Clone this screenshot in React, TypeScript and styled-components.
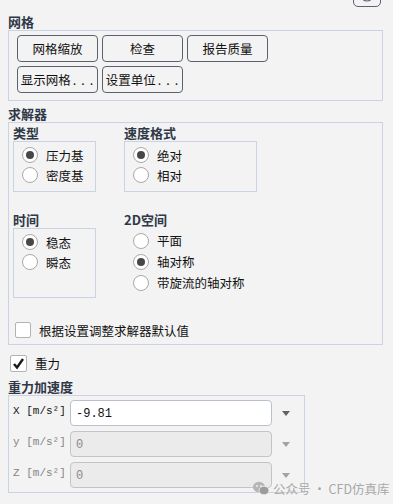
import styled, { createGlobalStyle } from "styled-components"

const GlobalStyle = createGlobalStyle`
  body {
    margin: 0;
    background: #f3f3f3;
    font-family: "Noto Sans CJK SC", "Noto Sans", sans-serif;
    color: #111;
  }
`

const Page = styled.div`
  position: relative;
  width: 393px;
  height: 504px;
  overflow: hidden;
  padding-left: 8px;
  box-sizing: border-box;
`

const TopBar = styled.div`
  height: 7px;
  display: flex;
  justify-content: flex-end;
  align-items: flex-end;
  overflow: hidden;
  margin-right: 12px;
`

const IconButton = styled.div`
  width: 28px;
  height: 20px;
  flex-shrink: 0;
  box-sizing: border-box;
  border: 1px solid #5a6270;
  border-radius: 5px;
  display: flex;
  justify-content: center;
  align-items: flex-start;
`

const SectionTitle = styled.div<{ $top: number }>`
  margin-top: ${(p) => p.$top}px;
  font-size: 13px;
  font-weight: 700;
  line-height: 16px;
  height: 16px;
  color: #2f3847;
`

const Group = styled.div<{ $w: number; $h: number }>`
  width: ${(p) => p.$w}px;
  height: ${(p) => p.$h}px;
  box-sizing: border-box;
  border: 1px solid #cbd3e3;
`

const ButtonGrid = styled.div`
  display: grid;
  grid-template-columns: repeat(3, 81px);
  grid-auto-rows: 27px;
  column-gap: 4px;
  row-gap: 4px;
  padding: 4px 0 0 8px;
`

const Button = styled.div`
  box-sizing: border-box;
  border: 1px solid #5a6270;
  border-radius: 4px;
  display: flex;
  align-items: center;
  justify-content: center;
  font-size: 12.5px;
  color: #111;
  white-space: nowrap;
`

const Dots = styled.span`
  letter-spacing: 5px;
  margin-left: 2px;
  margin-right: -4px;
`

const SolverGrid = styled.div`
  display: grid;
  grid-template-columns: 111px 1fr;
  row-gap: 20px;
  padding: 2px 0 0 4px;
`

const SubTitle = styled.div`
  font-size: 13px;
  font-weight: 700;
  line-height: 16px;
  height: 16px;
  color: #2f3847;
`

const SubBox = styled.div<{ $w: number; $h: number }>`
  width: ${(p) => p.$w}px;
  height: ${(p) => p.$h}px;
  box-sizing: border-box;
  border: 1px solid #cbd3e3;
  padding: 3px 0 0 8px;
`

const RadioList = styled.div`
  padding: 2px 0 0 9px;
`

const RadioRow = styled.div<{ $h?: number }>`
  height: ${(p) => p.$h ?? 20}px;
  display: flex;
  align-items: center;
  gap: 8px;
  font-size: 12.5px;
  color: #111;
`

const RadioCircle = styled.span<{ $on?: boolean }>`
  width: 16px;
  height: 16px;
  box-sizing: border-box;
  border-radius: 50%;
  border: 1px solid #a9a9a9;
  background: #fff;
  display: flex;
  align-items: center;
  justify-content: center;

  &::after {
    content: "";
    width: 8px;
    height: 8px;
    border-radius: 50%;
    background: ${(p) => (p.$on ? "#474747" : "transparent")};
  }
`

const CheckRow = styled.div<{ $top: number; $left: number }>`
  margin-top: ${(p) => p.$top}px;
  margin-left: ${(p) => p.$left}px;
  height: 18px;
  display: flex;
  align-items: center;
  gap: 8px;
  font-size: 12.5px;
  color: #111;
`

const CheckBox = styled.span<{ $size: number }>`
  width: ${(p) => p.$size}px;
  height: ${(p) => p.$size}px;
  box-sizing: border-box;
  border: 1px solid #b3b3b3;
  border-radius: 2px;
  background: #fff;
  display: flex;
  align-items: center;
  justify-content: center;
`

const VectorRows = styled.div`
  display: flex;
  flex-direction: column;
  gap: 5px;
  padding: 4px 0 0 4px;
`

const VectorRow = styled.div`
  display: flex;
  align-items: center;
  height: 26px;
`

const AxisLabel = styled.div<{ $dim?: boolean }>`
  width: 57px;
  align-self: flex-start;
  padding-top: 3px;
  font-family: "Liberation Mono", "Noto Sans CJK SC", monospace;
  font-size: 11px;
  line-height: 16px;
  color: ${(p) => (p.$dim ? "#868686" : "#151515")};
  white-space: nowrap;
`

const ValueField = styled.div<{ $dim?: boolean }>`
  width: 202px;
  height: 26px;
  box-sizing: border-box;
  border: 1px solid ${(p) => (p.$dim ? "#c4c4c4" : "#b9c0cb")};
  border-radius: 4px;
  background: ${(p) => (p.$dim ? "#ebebeb" : "#fff")};
  padding: 3px 0 0 5px;
  font-family: "Liberation Mono", monospace;
  font-size: 12px;
  line-height: 20px;
  color: ${(p) => (p.$dim ? "#8a8a8a" : "#111")};
`

const DropArrow = styled.span<{ $dim?: boolean }>`
  margin-left: 10px;
  width: 0;
  height: 0;
  border-left: 4px solid transparent;
  border-right: 4px solid transparent;
  border-top: 5px solid ${(p) => (p.$dim ? "#a3a3a3" : "#5f6368")};
`

const Watermark = styled.div`
  position: absolute;
  left: 253px;
  top: 479px;
  display: flex;
  align-items: center;
  gap: 4px;
  font-size: 12.5px;
  color: #a8a8a8;
  white-space: nowrap;
`

export default function App() {
  return (
    <Page>
      <GlobalStyle />
      <TopBar>
        <IconButton>
          <svg width="14" height="18" viewBox="0 0 14 18">
            <circle cx="7" cy="7" r="6" fill="none" stroke="#5a6270" strokeWidth="1.2" />
          </svg>
        </IconButton>
      </TopBar>

      <SectionTitle $top={7}>网格</SectionTitle>
      <Group $w={375} $h={71}>
        <ButtonGrid>
          <Button>网格缩放</Button>
          <Button>检查</Button>
          <Button>报告质量</Button>
          <Button>
            显示网格<Dots>...</Dots>
          </Button>
          <Button>
            设置单位<Dots>...</Dots>
          </Button>
        </ButtonGrid>
      </Group>

      <SectionTitle $top={5}>求解器</SectionTitle>
      <Group $w={375} $h={223}>
        <SolverGrid>
          <div>
            <SubTitle>类型</SubTitle>
            <SubBox $w={83} $h={51}>
              <RadioRow>
                <RadioCircle $on />
                压力基
              </RadioRow>
              <RadioRow>
                <RadioCircle />
                密度基
              </RadioRow>
            </SubBox>
          </div>
          <div>
            <SubTitle>速度格式</SubTitle>
            <SubBox $w={133} $h={51}>
              <RadioRow>
                <RadioCircle $on />
                绝对
              </RadioRow>
              <RadioRow>
                <RadioCircle />
                相对
              </RadioRow>
            </SubBox>
          </div>
          <div>
            <SubTitle>时间</SubTitle>
            <SubBox $w={83} $h={70}>
              <RadioRow>
                <RadioCircle $on />
                稳态
              </RadioRow>
              <RadioRow>
                <RadioCircle />
                瞬态
              </RadioRow>
            </SubBox>
          </div>
          <div>
            <SubTitle>2D空间</SubTitle>
            <RadioList>
              <RadioRow $h={21}>
                <RadioCircle />
                平面
              </RadioRow>
              <RadioRow $h={21}>
                <RadioCircle $on />
                轴对称
              </RadioRow>
              <RadioRow $h={21}>
                <RadioCircle />
                带旋流的轴对称
              </RadioRow>
            </RadioList>
          </div>
        </SolverGrid>
        <CheckRow $top={23} $left={6}>
          <CheckBox $size={16} />
          根据设置调整求解器默认值
        </CheckRow>
      </Group>

      <CheckRow $top={9} $left={2}>
        <CheckBox $size={17}>
          <svg width="13" height="13" viewBox="0 0 13 13">
            <path d="M2 7 L5 10.5 L11 2" fill="none" stroke="#1a1a1a" strokeWidth="2.4" />
          </svg>
        </CheckBox>
        重力
      </CheckRow>

      <SectionTitle $top={7}>重力加速度</SectionTitle>
      <Group $w={297} $h={98}>
        <VectorRows>
          <VectorRow>
            <AxisLabel>X [m/s²]</AxisLabel>
            <ValueField>-9.81</ValueField>
            <DropArrow />
          </VectorRow>
          <VectorRow>
            <AxisLabel $dim>y [m/s²]</AxisLabel>
            <ValueField $dim>0</ValueField>
            <DropArrow $dim />
          </VectorRow>
          <VectorRow>
            <AxisLabel $dim>Z [m/s²]</AxisLabel>
            <ValueField $dim>0</ValueField>
            <DropArrow $dim />
          </VectorRow>
        </VectorRows>
      </Group>

      <Watermark>
        <svg width="16" height="15" viewBox="0 0 16 15">
          <ellipse cx="6" cy="6" rx="6" ry="5.2" fill="#b5b5b5" />
          <ellipse cx="11" cy="9.5" rx="5" ry="4.3" fill="#9c9c9c" stroke="#f3f3f3" strokeWidth="0.8" />
          <circle cx="4" cy="5" r="0.9" fill="#f3f3f3" />
          <circle cx="8" cy="5" r="0.9" fill="#f3f3f3" />
        </svg>
        公众号 · CFD仿真库
      </Watermark>
    </Page>
  )
}
